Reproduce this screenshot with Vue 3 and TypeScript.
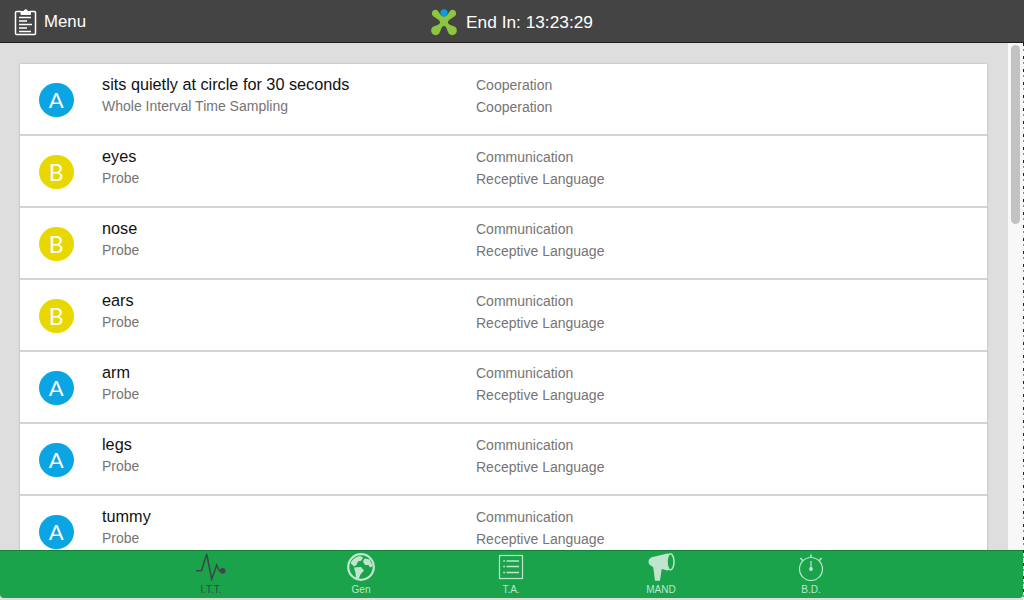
<script setup lang="ts">
interface Row { badge: 'A' | 'B'; title: string; sub: string; cat: string; area: string }
const rows: Row[] = [
  { badge: 'A', title: 'sits quietly at circle for 30 seconds', sub: 'Whole Interval Time Sampling', cat: 'Cooperation', area: 'Cooperation' },
  { badge: 'B', title: 'eyes', sub: 'Probe', cat: 'Communication', area: 'Receptive Language' },
  { badge: 'B', title: 'nose', sub: 'Probe', cat: 'Communication', area: 'Receptive Language' },
  { badge: 'B', title: 'ears', sub: 'Probe', cat: 'Communication', area: 'Receptive Language' },
  { badge: 'A', title: 'arm', sub: 'Probe', cat: 'Communication', area: 'Receptive Language' },
  { badge: 'A', title: 'legs', sub: 'Probe', cat: 'Communication', area: 'Receptive Language' },
  { badge: 'A', title: 'tummy', sub: 'Probe', cat: 'Communication', area: 'Receptive Language' },
]
</script>

<template>
  <div class="app">
    <header class="top">
      <div class="menu">
        <svg width="24" height="30" viewBox="0 0 24 30" fill="none" stroke="#fff">
          <path d="M7 5.500H2.500a1 1 0 0 0-1 1v21a1 1 0 0 0 1 1h18a1 1 0 0 0 1-1v-21a1 1 0 0 0-1-1H16" stroke-width="1.500"/>
          <path d="M7 8.500V5.500h3a1.700 1.700 0 0 1 3.500 0h3v3z" fill="#fff" stroke-width="1"/>
          <path d="M5 11.500h12M5 15h8M5 18.500h13M5 22h8M5 25.500h12" stroke-width="1.500"/>
        </svg>
        <span class="menu-label">Menu</span>
      </div>
      <div class="timer">
        <svg width="26" height="27" viewBox="0 0 26 27">
          <path d="M1 5.500C0 2 4-.5 6.500 1.500 8.500 3.500 9.500 7.500 13 7.500s4.500-4 6.500-6C22-.5 26 2 25 5.500 24 8.500 18 9.500 17 13c-.5 2 3 3 6.500 4.500 2.500 1 3 4.500 1.500 6.800-2 2.500-6 2.500-7.500-.3-1.500-3-2-7-4.500-7s-3 4-4.500 7c-1.500 2.800-5.500 2.800-7.500.3-1.500-2.300-1-5.800 1.500-6.800C6 16 9.500 15 9 13 8 9.500 2 8.500 1 5.500z" fill="#8cc63f"/>
          <circle cx="13" cy="3.800" r="3.600" fill="#0a9be0"/>
        </svg>
        <span class="clock">End In: 13:23:29</span>
      </div>
    </header>

    <main class="body">
      <div class="list-wrap">
        <div class="card">
          <div v-for="r in rows" :key="r.title" class="row">
            <div class="badge" :class="r.badge === 'A' ? 'a' : 'b'">{{ r.badge }}</div>
            <div class="col-main">
              <div class="title">{{ r.title }}</div>
              <div class="sub">{{ r.sub }}</div>
            </div>
            <div class="col-meta">
              <div>{{ r.cat }}</div>
              <div>{{ r.area }}</div>
            </div>
          </div>
        </div>
      </div>
      <div class="track"><div class="thumb"></div></div>
    </main>

    <nav class="tabs">
      <div class="tab dark">
        <svg width="32" height="28" viewBox="0 0 32 28" fill="none" stroke="#3f4444" stroke-width="1.500">
          <path d="M1 17.700h5.500L11.700 1l5 25.300 5-14.300 2.600 5.700h3"/>
          <circle cx="27.700" cy="17.700" r="2.800" fill="#3f4444" stroke="none"/>
        </svg>
        <span>I.T.T.</span>
      </div>
      <div class="tab">
        <svg width="28" height="28" viewBox="0 0 28 28">
          <circle cx="14" cy="14" r="12.800" fill="none" stroke="#bfe6cc" stroke-width="2.200"/>
          <path d="M3.500 10C5.500 6 9 3.500 13 3l3 1.500-1.500 3-3.500 1-1.500 3.500-2.500 1.500zM7 14.500l7-.5 3 3.500-3.500 4-2 5-2.500-1-.5-5.500zM17.500 5.500l5 1 3.500 6.500-3 1.500-1.500-2.500h-3.500l-2-3.500z" fill="#bfe6cc"/>
        </svg>
        <span>Gen</span>
      </div>
      <div class="tab">
        <svg width="26" height="28" viewBox="0 0 26 28" fill="none" stroke="#bfe6cc">
          <rect x="1.500" y="2.500" width="23" height="23" stroke-width="1.200"/>
          <path d="M8.500 8h12.500M8.500 13.500h12.500M8.500 19.500h12.500" stroke-width="1.600"/>
          <path d="M5.200 8h1.800M5.200 13.500h1.800M5.200 19.500h1.800" stroke-width="1.600"/>
        </svg>
        <span>T.A.</span>
      </div>
      <div class="tab">
        <svg width="28" height="28" viewBox="0 0 28 28">
          <path d="M1.500 8.700C1.500 6.500 3 5 4.700 4.300L21.300.3v17.400L14.700 16l-1.700 11.700H8L6.300 14.500 4.700 13C3 12.500 1.500 11 1.500 8.700z" fill="#bfe6cc"/>
          <ellipse cx="23.500" cy="8.800" rx="3.500" ry="8" fill="#1aa34a" stroke="#bfe6cc" stroke-width="1.500"/>
        </svg>
        <span>MAND</span>
      </div>
      <div class="tab">
        <svg width="26" height="28" viewBox="0 0 26 28" fill="none" stroke="#bfe6cc" stroke-width="1.200">
          <circle cx="13" cy="16" r="11.500"/>
          <path d="M13 4.500V1.500M4.500 7.500 2.500 5M21.500 7.500 23.500 5" stroke-width="1.500"/>
          <path d="M13 8v8"/>
          <circle cx="13" cy="16" r="1.900" fill="#bfe6cc" stroke="none"/>
        </svg>
        <span>B.D.</span>
      </div>
    </nav>
    <div class="edge"></div>
  </div>
</template>

<style>
html, body { margin: 0; height: 100%; overflow: hidden; }
</style>

<style scoped>
.app {
  position: relative;
  width: 1024px;
  height: 600px;
  display: flex;
  flex-direction: column;
  overflow: hidden;
  font-family: "Liberation Sans", Arial, sans-serif;
  background: #dedede;
}
.top {
  height: 42px;
  flex: none;
  background: #444;
  border-bottom: 1px solid #1c1c1c;
  display: grid;
  grid-template-columns: 1fr auto 1fr;
  align-items: center;
  color: #fff;
}
.menu {
  display: flex;
  align-items: center;
  gap: 6px;
  padding-left: 14px;
  font-size: 16.800px;
}
.menu-label { margin-top: 1px; }
.timer {
  display: flex;
  align-items: center;
  gap: 9px;
  font-size: 17.300px;
  grid-column: 2;
  padding-top: 2px;
}
.clock { margin-top: 1px; }
.body {
  flex: 1;
  min-height: 0;
  display: flex;
  overflow: hidden;
}
.list-wrap {
  flex: 1;
  padding: 21px 21px 0 20px;
  min-width: 0;
}
.card {
  box-shadow: 0 0 2px rgba(0, 0, 0, 0.22);
}
.row {
  height: 70px;
  background: #fff;
  border-bottom: 2px solid #d4d4d4;
  display: flex;
  align-items: flex-start;
}
.badge {
  width: 34.500px;
  height: 34.500px;
  margin: 18.500px 0 0 19px;
  border-radius: 50%;
  color: #fff;
  font-family: Lato, "Liberation Sans", sans-serif;
  font-size: 22px;
  line-height: 34.500px;
  text-align: center;
  flex: none;
}
.badge.a { background: #0ba5e3; }
.badge.b { background: #e8d800; font-size: 23px; }
.col-main {
  width: 374px;
  margin-left: 28.500px;
  padding-top: 10px;
  flex: none;
}
.title {
  font-size: 16.250px;
  line-height: 20px;
  color: #111;
}
.sub {
  font-size: 14px;
  line-height: 20px;
  margin-top: 2px;
  color: #757575;
}
.col-meta {
  padding-top: 10px;
  font-size: 14px;
  line-height: 22px;
  color: #757575;
}
.track {
  width: 16px;
  flex: none;
  background: #f8f8f8;
  padding: 2px 0 0 3px;
  box-sizing: border-box;
}
.thumb {
  width: 9px;
  height: 179px;
  background: #c2c2c2;
  border-radius: 5px;
}
.tabs {
  height: 47px;
  flex: none;
  background: #1aa34a;
  border-top: 1px solid #14803a;
  border-radius: 0 0 4px 4px;
  margin: 0 1px 2px 0;
  display: flex;
  padding-left: 136px;
}
.tab {
  width: 150px;
  display: flex;
  flex-direction: column;
  align-items: center;
  padding-top: 2px;
  font-size: 10px;
  color: #bfe6cc;
}
.tab svg { flex: none; }
.tab span { margin-top: 3px; line-height: 11px; }
.tab.dark { color: #3f4444; }
.edge {
  position: absolute;
  top: 43px;
  right: 0;
  bottom: 0;
  width: 1px;
  background: repeating-linear-gradient(to bottom, #222 0 3px, #f5f5f5 3px 6px, #a86 6px 8px, #f5f5f5 8px 13px);
}
</style>
